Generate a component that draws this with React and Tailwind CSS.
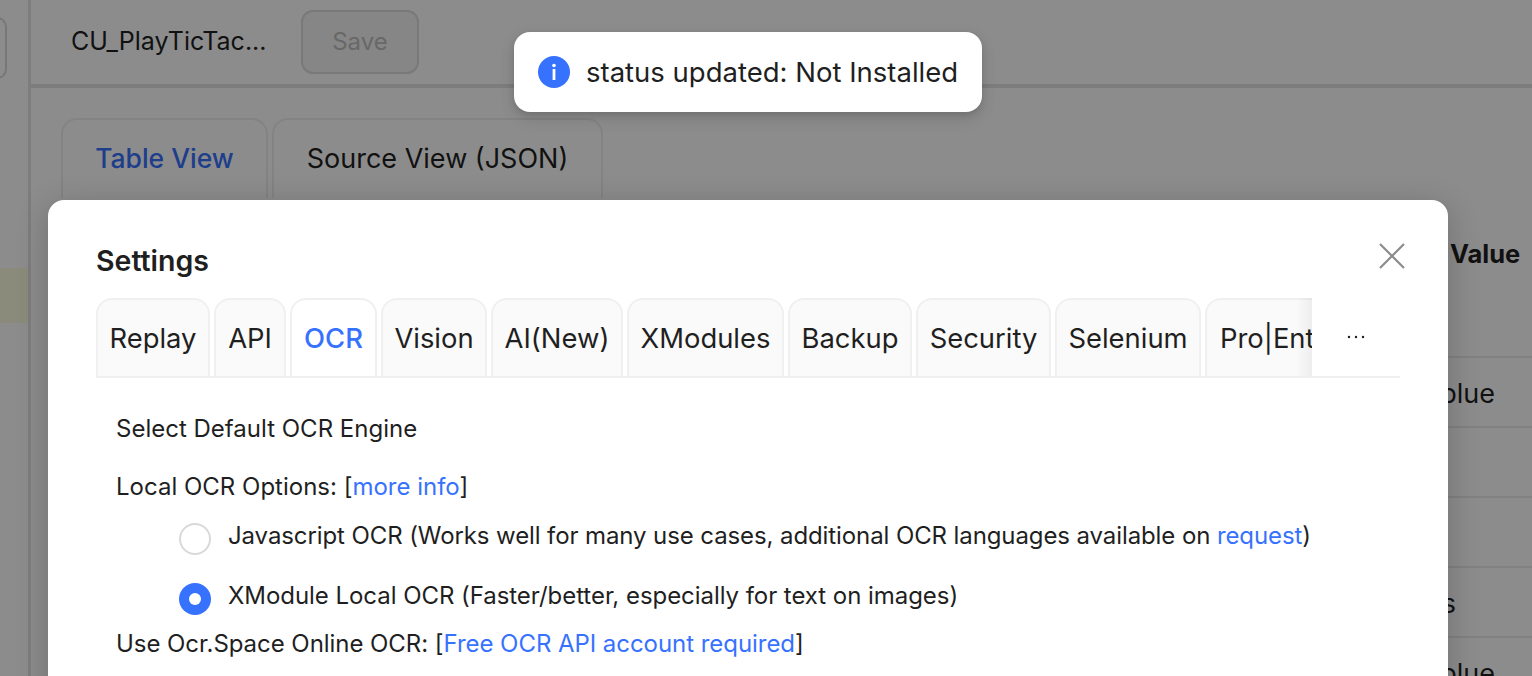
import React from "react"

const tabs = [
  { label: "Replay", w: "w-[114px]" },
  { label: "API", w: "w-[72px]" },
  { label: "OCR", w: "w-[87px]", active: true },
  { label: "Vision", w: "w-[106px]" },
  { label: "AI(New)", w: "w-[132px]" },
  { label: "XModules", w: "w-[157px]" },
  { label: "Backup", w: "w-[124px]" },
  { label: "Security", w: "w-[135px]" },
  { label: "Selenium", w: "w-[146px]" },
  { label: "Pro|Ent", w: "w-[134px]", clipped: true },
]

const rows = [
  { text: "blue", end: "pr-[37px]" },
  { text: "", end: "pr-[37px]" },
  { text: "", end: "pr-[37px]" },
  { text: "s", end: "pr-[76px]" },
  { text: "blue", end: "pr-[37px]" },
]

const BackgroundPage = () => {
  return (
    <div className="flex h-full bg-white text-[#1f1f1f]">
      {/* Sidebar */}
      <div className="w-[28px] shrink-0 flex flex-col">
        <div className="mt-[17px] -ml-[20px] w-[27px] h-[62px] rounded-[10px] border-2 border-[#d9d9d9]"></div>
        <div className="mt-[189px] h-[55px] w-full bg-[#fdfde0]"></div>
      </div>
      <div className="w-[3px] shrink-0 bg-[#e4e4e4]"></div>

      <div className="flex-1 min-w-0 flex flex-col">
        {/* Header */}
        <div className="h-[84px] shrink-0 flex items-center pl-[40px] border-b-[4px] border-[#e4e4e4] box-content">
          <span className="text-[25px] w-[230px]">CU_PlayTicTac...</span>
          <button className="w-[118px] h-[64px] rounded-[12px] border-2 border-[#dcdcdc] bg-[#f5f5f5] text-[24px] text-[#bdbdbd]">Save</button>
        </div>

        {/* View tabs */}
        <div className="flex gap-[4px] pl-[30px] pt-[30px]">
          <div className="w-[207px] h-[80px] rounded-t-[16px] border-2 border-b-0 border-[#efefef] flex items-center justify-center text-[26.5px] font-medium text-[#3772ff]">Table View</div>
          <div className="w-[331px] h-[80px] rounded-t-[16px] border-2 border-b-0 border-[#efefef] flex items-center justify-center text-[27px]">Source View (JSON)</div>
        </div>

        {/* Table behind the modal */}
        <div className="flex justify-end">
          <div className="w-[120px] flex flex-col">
            <div className="h-[158px] pt-[38px] pl-[38px] text-[25.5px] leading-[36px] font-bold">Value</div>
            {rows.map((row, i) => (
              <div key={i} className={`h-[70px] shrink-0 border-t-2 border-[#ececec] flex items-center justify-end pt-[5px] ${row.end} text-[27px]`}>
                {row.text}
              </div>
            ))}
          </div>
        </div>
      </div>
    </div>
  )
}

const Toast = () => {
  return (
    <div className="absolute left-[514px] top-[32px] w-[468px] h-[80px] rounded-[16px] bg-white flex items-center pl-[24px] gap-[16px] shadow-[0_6px_16px_rgba(0,0,0,0.12),0_3px_6px_rgba(0,0,0,0.1)] z-20">
      <svg width="32" height="32" viewBox="0 0 32 32" className="shrink-0">
        <circle cx="16" cy="16" r="16" fill="#3772ff" />
        <circle cx="16" cy="9.5" r="1.8" fill="#fff" />
        <rect x="14.6" y="13" width="2.8" height="11" fill="#fff" />
      </svg>
      <span className="pt-[1px] text-[27.5px] text-[#1f1f1f]">status updated: Not Installed</span>
    </div>
  )
}

const SettingsModal = () => {
  return (
    <div className="absolute left-[48px] top-[200px] w-[1400px] h-[520px] rounded-t-[16px] bg-white pl-[48px] pr-[48px] text-[#1f1f1f] shadow-[0_6px_32px_rgba(0,0,0,0.2)] z-10">
      <button className="absolute left-[1331px] top-[43px] text-[#8c8c8c]">
        <svg width="26" height="26" viewBox="0 0 26 26" fill="none" stroke="currentColor" strokeWidth="2.2">
          <path d="M1 1 L25 25 M25 1 L1 25" />
        </svg>
      </button>
      <div className="pt-[43px] h-[98px] text-[28.5px] font-semibold leading-[36px]">Settings</div>

      {/* Tab bar */}
      <div className="relative flex h-[80px] border-b-2 border-[#f0f0f0]">
        <div className="relative w-[1216px] flex gap-[4px] overflow-hidden">
          {tabs.map((tab) => (
            <div
              key={tab.label}
              className={`${tab.w} shrink-0 rounded-t-[16px] border-2 flex items-center pt-[2px] text-[27.4px] ${
                tab.clipped ? "justify-start pl-[13px]" : "justify-center"
              } ${
                tab.active
                  ? "h-[80px] bg-white border-[#f0f0f0] border-b-white text-[#3772ff] font-medium"
                  : "h-[78px] bg-[#fafafa] border-[#f0f0f0] border-b-0"
              }`}
            >
              {tab.label}
            </div>
          ))}
          {/* scroll fade on the last tab */}
          <div className="absolute right-0 top-0 bottom-0 w-[16px] bg-gradient-to-r from-transparent to-black/5"></div>
        </div>
        <div className="flex-1 pl-[34px] pt-[36px]">
          <svg width="20" height="6" viewBox="0 0 20 6">
            <circle cx="3" cy="3" r="1.2" fill="#1f1f1f" />
            <circle cx="10" cy="3" r="1.2" fill="#1f1f1f" />
            <circle cx="17" cy="3" r="1.2" fill="#1f1f1f" />
          </svg>
        </div>
      </div>

      {/* OCR tab body */}
      <div className="pl-[20px] text-[24px] leading-[32px]">
        <div className="mt-[35px]">Select Default OCR Engine</div>
        <div className="mt-[26px]">
          Local OCR Options: [<a className="text-[#3772ff]">more info</a>]
        </div>
        <div className="mt-[17px] pl-[63px] flex items-start gap-[17px] h-[32px] tracking-[-0.1px]">
          <span className="mt-[3px] w-[32px] h-[32px] shrink-0 rounded-full border-2 border-[#d9d9d9] bg-white"></span>
          <span>
            Javascript OCR (Works well for many use cases, additional OCR languages available on{" "}
            <a className="text-[#3772ff]">request</a>)
          </span>
        </div>
        <div className="mt-[28px] pl-[63px] flex items-start gap-[17px] h-[32px] tracking-[-0.05px]">
          <span className="mt-[3px] w-[32px] h-[32px] shrink-0 rounded-full bg-[#3772ff] flex items-center justify-center">
            <span className="w-[12px] h-[12px] rounded-full bg-white"></span>
          </span>
          <span>XModule Local OCR (Faster/better, especially for text on images)</span>
        </div>
        <div className="mt-[16px] tracking-[-0.05px]">
          Use Ocr.Space Online OCR: [<a className="text-[#3772ff]">Free OCR API account required</a>]
        </div>
      </div>
    </div>
  )
}

export default function App() {
  return (
    <div className="relative w-[1532px] h-[676px] overflow-hidden font-['Inter',sans-serif]">
      <BackgroundPage />
      <div className="absolute inset-0 bg-black/45"></div>
      <SettingsModal />
      <Toast />
    </div>
  )
}
